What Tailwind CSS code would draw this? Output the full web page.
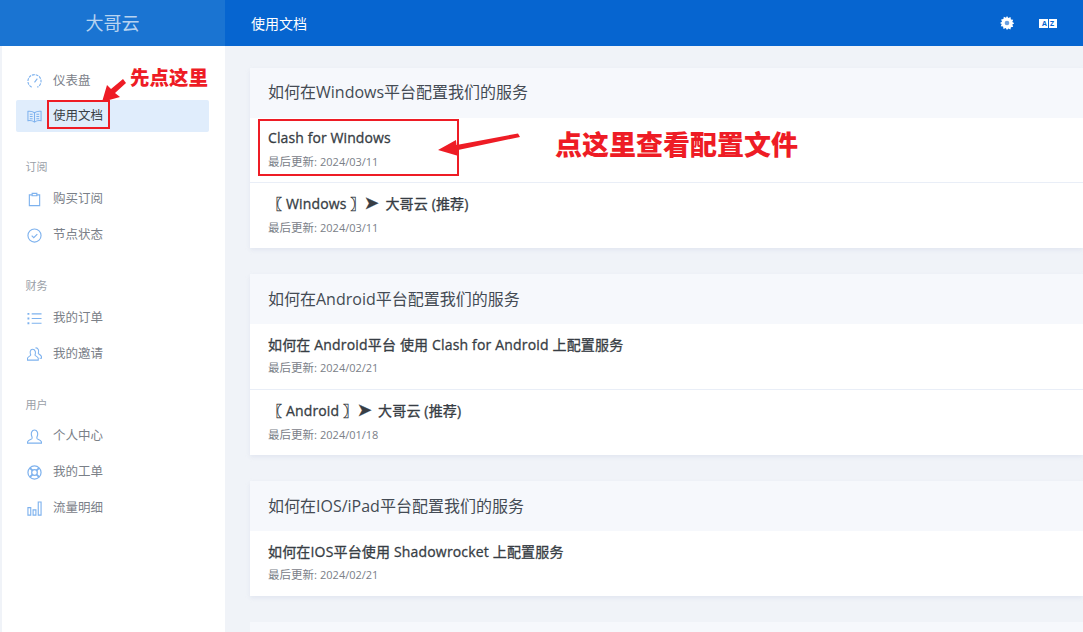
<!DOCTYPE html>
<html lang="zh">
<head>
<meta charset="utf-8">
<script src="https://cdn.jsdelivr.net/npm/@tailwindcss/browser@4"></script>
</head>
<body class="m-0 overflow-hidden bg-[#f0f3f8] font-['Open_Sans','Noto_Sans_CJK_SC',sans-serif]">
<div class="relative h-[632px] w-[1083px] overflow-hidden">
  <header class="flex h-[46px] bg-[#0665d0] text-white">
    <div class="flex w-[225px] items-center justify-center bg-[#1a74d2] text-[18px] text-white/70">大哥云</div>
    <div class="flex flex-1 items-center justify-between pl-[26px] pr-[26px]">
      <span class="text-[14px]">使用文档</span>
      <div class="flex items-center gap-[25px]">
        <svg class="size-[14px]" viewBox="0 0 14 14" fill="#fff"><path d="M7 0l1.300 2 2.200-.9.4 2.300 2.300.4-.9 2.200 2 1.300-2 1.300.9 2.200-2.300.4-.4 2.300-2.200-.9L7 14l-1.300-2-2.200.9-.4-2.300-2.300-.4.9-2.200L0 7l2-1.300-.9-2.200 2.300-.4.4-2.300 2.200.9z"/><circle cx="7" cy="7" r="2.300" fill="#6a9fe0"/></svg>
        <div class="flex h-[9px] w-[18px] items-center justify-center gap-[1px] bg-white text-[7px] font-bold leading-none text-[#0665d0]"><span>A</span><span class="h-full w-px bg-[#0665d0]"></span><span>Z</span></div>
      </div>
    </div>
  </header>

  <div class="flex h-[586px]">
    <aside class="w-[225px] shrink-0 border-l-2 border-[#f0f3f8] bg-white pl-[14px] pr-[16px] pt-[17px] text-[12.500px]">
      <nav class="flex flex-col">
        <a class="mb-[1px] flex h-[36px] items-center gap-[11px] pl-[11px] text-[#7a8088]">
          <svg class="size-[15px]" viewBox="0 0 16 16" fill="none" stroke="#7eb2ee" stroke-width="1.200"><path d="M5 14a7 7 0 1 1 6 0" stroke-dasharray="3 1"/><path d="M8 9l3-4" /></svg>
          <span>仪表盘</span>
        </a>
        <a class="flex h-[32px] items-center gap-[11px] rounded-[2px] bg-[#e0edfc] pl-[11px] pt-[1px] text-[#3a3f46]">
          <svg class="size-[15px]" viewBox="0 0 16 16" fill="none" stroke="#7eb2ee" stroke-width="1.100"><path d="M1 2.500c3-.5 5 0 7 1.500 2-1.500 4-2 7-1.500v10c-3-.5-5 0-7 1.500-2-1.500-4-2-7-1.500zM8 4v10M3 5.500h3M3 8h3M3 10.500h3M10 5.500h3M10 8h3M10 10.500h3"/></svg>
          <span>使用文档</span>
        </a>

        <div class="mt-[25px] h-[20px] pl-[9.500px] text-[11px] leading-[20px] text-[#9aa0a8]">订阅</div>
        <a class="mt-[4px] flex h-[36px] items-center gap-[11px] pl-[11px] text-[#7a8088]">
          <svg class="size-[15px]" viewBox="0 0 16 16" fill="none" stroke="#7eb2ee" stroke-width="1.200"><path d="M5 3H2.500v11.500h11V3H11M5.500 1.500h5V4h-5z"/></svg>
          <span>购买订阅</span>
        </a>
        <a class="flex h-[36px] items-center gap-[11px] pl-[11px] text-[#7a8088]">
          <svg class="size-[15px]" viewBox="0 0 16 16" fill="none" stroke="#7eb2ee" stroke-width="1.200"><circle cx="8" cy="8" r="7"/><path d="M5 8.200l2.200 2.200L11 6.500"/></svg>
          <span>节点状态</span>
        </a>

        <div class="mt-[23px] h-[20px] pl-[9.500px] text-[11px] leading-[20px] text-[#9aa0a8]">财务</div>
        <a class="mt-[4px] flex h-[36px] items-center gap-[11px] pl-[11px] text-[#7a8088]">
          <svg class="size-[15px]" viewBox="0 0 16 16" fill="none" stroke="#7eb2ee" stroke-width="1.200"><path d="M5 3h10.500M5 8h10.500M5 13h10.500"/><path d="M.5 3h2M.5 8h2M.5 13h2" stroke-width="2"/></svg>
          <span>我的订单</span>
        </a>
        <a class="flex h-[36px] items-center gap-[11px] pl-[11px] text-[#7a8088]">
          <svg class="size-[15px]" viewBox="0 0 16 16" fill="none" stroke="#7eb2ee" stroke-width="1.100"><path d="M6 2.500c3 0 3.500 3.500 2.500 6 0 1 3 1.500 3.500 3.500v2H.5v-2c.5-2 3.500-2.500 3.500-3.500-1-2.500-1-6 2-6zM9 1c3-.5 4 3 3 5.500-.2 1 3 1.500 3.500 4V12h-2"/></svg>
          <span>我的邀请</span>
        </a>

        <div class="mt-[23px] h-[20px] pl-[9.500px] text-[11px] leading-[20px] text-[#9aa0a8]">用户</div>
        <a class="mt-[3px] flex h-[36px] items-center gap-[11px] pl-[11px] text-[#7a8088]">
          <svg class="size-[15px]" viewBox="0 0 16 16" fill="none" stroke="#7eb2ee" stroke-width="1.200"><path d="M8 1c3 0 4 3.500 3 6.500-.5 1.500-1 2 0 3 1 .8 4 1 4.500 3.500v1H.5v-1c.5-2.500 3.500-2.700 4.500-3.500 1-1 .5-1.500 0-3C4 4.500 5 1 8 1z"/></svg>
          <span>个人中心</span>
        </a>
        <a class="flex h-[36px] items-center gap-[11px] pl-[11px] text-[#7a8088]">
          <svg class="size-[15px]" viewBox="0 0 16 16" fill="none" stroke="#7eb2ee" stroke-width="1.300"><circle cx="8" cy="8" r="7"/><circle cx="8" cy="8" r="3"/><path d="M3 3l3 3M13 3l-3 3M3 13l3-3M13 13l-3-3" stroke-width="2"/></svg>
          <span>我的工单</span>
        </a>
        <a class="flex h-[36px] items-center gap-[11px] pl-[11px] text-[#7a8088]">
          <svg class="size-[15px]" viewBox="0 0 16 16" fill="none" stroke="#7eb2ee" stroke-width="1.200"><path d="M1 7h3v8H1zM6.500 9.500h3V15h-3zM12 1h3v14h-3z"/></svg>
          <span>流量明细</span>
        </a>
      </nav>
    </aside>

    <main class="flex flex-1 flex-col gap-[26px] pl-[25px] pt-[22px]">
      <section class="bg-white shadow-[0_2px_4px_rgba(200,210,225,0.35)]">
        <h2 class="flex h-[50px] items-center bg-[#f6f8fc] pb-[3px] pl-[18px] text-[16px] font-normal text-[#444b54]">如何在Windows平台配置我们的服务</h2>
        <div class="h-[65px] border-b border-[#e9eef7] pl-[18px] pt-[10px]">
          <div class="text-[14px] leading-[20px] tracking-[0.1px] text-[#373d44] [-webkit-text-stroke:0.3px]">Clash for Windows</div>
          <div class="mt-[4px] text-[11.500px] leading-[20px] text-[#7a8088]">最后更新: <span class="text-[11px]">2024/03/11</span></div>
        </div>
        <div class="h-[65px] pl-[18px] pt-[10px]">
          <div class="text-[14px] leading-[20px] tracking-[0.15px] text-[#373d44] [-webkit-text-stroke:0.3px]">〖 Windows 〗<span class="mr-[2px] text-[18px] leading-none">➤</span> 大哥云 (推荐)</div>
          <div class="mt-[4px] text-[11.500px] leading-[20px] text-[#7a8088]">最后更新: <span class="text-[11px]">2024/03/11</span></div>
        </div>
      </section>

      <section class="bg-white shadow-[0_2px_4px_rgba(200,210,225,0.35)]">
        <h2 class="flex h-[50px] items-center bg-[#f6f8fc] pl-[18px] text-[16px] font-normal text-[#444b54]">如何在Android平台配置我们的服务</h2>
        <div class="h-[66px] border-b border-[#e9eef7] pl-[18px] pt-[11px]">
          <div class="text-[14px] leading-[20px] tracking-[0.17px] text-[#373d44] [-webkit-text-stroke:0.3px]">如何在 Android平台 使用 Clash for Android 上配置服务</div>
          <div class="mt-[3px] text-[11.500px] leading-[20px] text-[#7a8088]">最后更新: <span class="text-[11px]">2024/02/21</span></div>
        </div>
        <div class="h-[65px] pl-[18px] pt-[10px]">
          <div class="text-[14px] leading-[20px] tracking-[0.15px] text-[#373d44] [-webkit-text-stroke:0.3px]">〖 Android 〗<span class="mr-[2px] text-[18px] leading-none">➤</span> 大哥云 (推荐)</div>
          <div class="mt-[4px] text-[11.500px] leading-[20px] text-[#7a8088]">最后更新: <span class="text-[11px]">2024/01/18</span></div>
        </div>
      </section>

      <section class="bg-white shadow-[0_2px_4px_rgba(200,210,225,0.35)]">
        <h2 class="flex h-[50px] items-center bg-[#f6f8fc] pl-[18px] text-[16px] font-normal text-[#444b54]">如何在IOS/iPad平台配置我们的服务</h2>
        <div class="h-[65px] pl-[18px] pt-[11px]">
          <div class="text-[14px] leading-[20px] tracking-[0.17px] text-[#373d44] [-webkit-text-stroke:0.3px]">如何在IOS平台使用 Shadowrocket 上配置服务</div>
          <div class="mt-[3px] text-[11.500px] leading-[20px] text-[#7a8088]">最后更新: <span class="text-[11px]">2024/02/21</span></div>
        </div>
      </section>

      <section class="h-[30px] bg-[#f6f8fc]"></section>
    </main>
  </div>

  <!-- red annotations laid over the page -->
  <div class="absolute left-[47px] top-[100px] h-[29px] w-[63px] border-2 border-[#ee1c25]"></div>
  <div class="absolute left-[258px] top-[119px] h-[57px] w-[201px] border-2 border-[#ee1c25]"></div>
  <div class="absolute left-[130px] top-[66px] text-[19.500px] font-black leading-[24px] text-[#ee1c25]">先点这里</div>
  <div class="absolute left-[555px] top-[128px] text-[27px] font-black leading-[34px] text-[#ee1c25]">点这里查看配置文件</div>
  <svg class="absolute left-0 top-0" width="1083" height="632" viewBox="0 0 1083 632" fill="#ee1c25">
    <path d="M102 102l5-17 4 4 12-10 3 4-11 10 5 4z"/>
    <path d="M438 150l18-10 .5 5 61.500-11.500 2 3.500-62 13 .5 6z"/>
  </svg>
</div>
</body>
</html>
